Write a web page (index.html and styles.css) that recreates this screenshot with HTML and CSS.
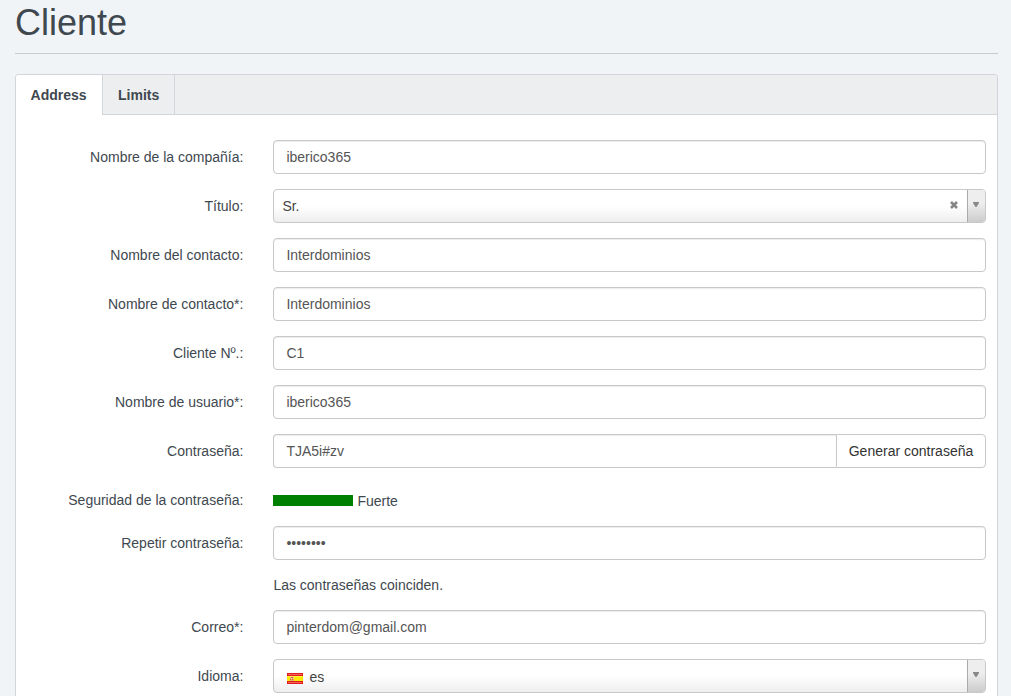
FILE: index.html
```html
<!DOCTYPE html>
<html lang="es">
<head>
<meta charset="utf-8">
<title>Cliente</title>
<link rel="stylesheet" href="styles.css">
</head>
<body>
<main class="page">
  <header class="page-header"><h1 class="page-title">Cliente</h1></header>
  <section class="panel">
    <nav class="tabs">
      <a class="tab tab-active">Address</a>
      <a class="tab">Limits</a>
    </nav>
    <form class="form">
      <div class="row">
        <label class="label" for="company">Nombre de la compañía:</label>
        <input class="input" id="company" type="text" value="iberico365">
      </div>
      <div class="row">
        <span class="label">Título:</span>
        <div class="select">
          <span class="select-value">Sr.</span>
          <svg class="select-clear" width="8" height="8" viewBox="0 0 8 8"><path d="M1 1L7 7M7 1L1 7" stroke="#858585" stroke-width="2.6"/></svg>
          <span class="select-arrow"><svg width="6" height="5" viewBox="0 0 6 5"><path d="M0 0H6V1L3.5 5H2.5L0 1Z" fill="#888"/></svg></span>
        </div>
      </div>
      <div class="row">
        <label class="label" for="contact">Nombre del contacto:</label>
        <input class="input" id="contact" type="text" value="Interdominios">
      </div>
      <div class="row">
        <label class="label" for="contact2">Nombre de contacto*:</label>
        <input class="input" id="contact2" type="text" value="Interdominios">
      </div>
      <div class="row">
        <label class="label" for="number">Cliente Nº.:</label>
        <input class="input" id="number" type="text" value="C1">
      </div>
      <div class="row">
        <label class="label" for="user">Nombre de usuario*:</label>
        <input class="input" id="user" type="text" value="iberico365">
      </div>
      <div class="row">
        <label class="label" for="pass">Contraseña:</label>
        <div class="input-group">
          <input class="input" id="pass" type="text" value="TJA5i#zv">
          <button class="button" type="button">Generar contraseña</button>
        </div>
      </div>
      <div class="row row-strength">
        <span class="label">Seguridad de la contraseña:</span>
        <div class="strength"><span class="strength-bar"></span><span>Fuerte</span></div>
      </div>
      <div class="row">
        <label class="label" for="repeat">Repetir contraseña:</label>
        <div class="field">
          <input class="input" id="repeat" type="text" value="••••••••">
          <p class="message">Las contraseñas coinciden.</p>
        </div>
      </div>
      <div class="row">
        <label class="label" for="mail">Correo*:</label>
        <input class="input" id="mail" type="text" value="pinterdom@gmail.com">
      </div>
      <div class="row">
        <span class="label">Idioma:</span>
        <div class="select select-language">
          <svg class="flag" width="16" height="11" viewBox="0 0 16 11">
            <path fill="#e01c1c" d="M0 0h16v11H0z"/>
            <path fill="#f2605a" d="M1 1h14v1H1zM1 9h14v1H1z"/>
            <path fill="#ffe800" d="M0 3h16v5H0z"/>
            <path fill="#fff34a" d="M1 3h14v1H1z"/>
            <path fill="#e8b060" d="M3 4h4v4H3z"/>
            <path fill="#cf5a48" d="M4 4h2v1H4zM3 6h1v1H3zM5 6h1v1H5z"/>
            <path fill="#e5c8be" d="M4 5h1v1H4zM6 5h1v1H6z"/>
          </svg>
          <span class="select-value">es</span>
          <span class="select-arrow"><svg width="6" height="5" viewBox="0 0 6 5"><path d="M0 0H6V1L3.5 5H2.5L0 1Z" fill="#888"/></svg></span>
        </div>
      </div>
    </form>
  </section>
</main>
</body>
</html>
```
FILE: styles.css
```css
* {
  box-sizing: border-box;
}

body {
  margin: 0;
  background: #f0f4f7;
  color: #40484f;
  font: 14px/20px "Liberation Sans", Arial, sans-serif;
}

.page {
  width: 983px;
  margin-left: 15px;
}

.page-header {
  height: 54px;
  padding-top: 3px;
  border-bottom: 1px solid #c6cbd0;
}

.page-title {
  margin: 0;
  font-size: 36px;
  font-weight: 400;
  line-height: 39px;
}

.panel {
  height: 622px;
  margin-top: 20px;
  border: 1px solid #d2d6da;
  border-bottom: 0;
  border-radius: 4px 4px 0 0;
  background: #fff;
}

.tabs {
  display: flex;
  height: 40px;
  border-bottom: 1px solid #d2d6da;
  border-radius: 3px 3px 0 0;
  background: #edeef0;
}

.tab {
  height: 39px;
  padding: 10px 15px;
  border-right: 1px solid #d2d6da;
  font-weight: 700;
}

.tab-active {
  height: 40px;
  padding: 10px 15.4px 10px 14.6px;
  border-radius: 3px 0 0 0;
  background: #fff;
}

.form {
  display: flex;
  flex-direction: column;
  gap: 15px;
  padding: 25px 11px 0 0;
}

.row {
  display: grid;
  grid-template-columns: 227.4px 713px;
  column-gap: 29.6px;
  align-items: start;
}

.label {
  padding-top: 7px;
  text-align: right;
}

.input {
  display: block;
  width: 100%;
  height: 34px;
  margin: 0;
  padding: 6px 12.4px;
  border: 1px solid #c8c8c8;
  border-radius: 4px;
  outline: 0;
  background: #fff;
  box-shadow: inset 0 1px 1px rgba(0, 0, 0, 0.075);
  color: #555;
  font: inherit;
}

.input-group {
  display: flex;
}

.input-group .input {
  flex: 1;
  min-width: 0;
  border-right: 0;
  border-radius: 4px 0 0 4px;
}

.button {
  width: 150px;
  height: 34px;
  padding: 0;
  border: 1px solid #c8c8c8;
  border-radius: 0 4px 4px 0;
  background: #fff;
  color: #333;
  font: inherit;
  white-space: nowrap;
}

.row-strength {
  height: 28px;
}

.strength {
  display: flex;
  align-items: center;
  gap: 4.4px;
  padding-top: 8px;
}

.strength-bar {
  width: 80px;
  height: 11px;
  margin-top: -1px;
  background: #008000;
}

.message {
  margin: 15px 0 0;
  padding-left: 0.4px;
}

.select {
  display: flex;
  align-items: center;
  height: 34px;
  padding-left: 8.4px;
  overflow: hidden;
  border: 1px solid #c8c8c8;
  border-radius: 4px;
  background: linear-gradient(to top, #eee 0%, #fff 50%);
  color: #444;
}

.select-value {
  flex: 1;
}

.select-clear {
  flex: none;
  margin: 0 9px 2px 0;
}

.select-arrow {
  flex: none;
  width: 18px;
  height: 32px;
  padding: 12px 0 0 5px;
  border-left: 1px solid #aaa;
  background: linear-gradient(to top, #ccc 0%, #eee 60%);
}

.select-arrow svg {
  display: block;
}

.select-language {
  padding-left: 13px;
}

.select-language .select-value {
  padding-top: 2px;
}

.flag {
  margin: 5px 6.4px 0 0;
}
```
